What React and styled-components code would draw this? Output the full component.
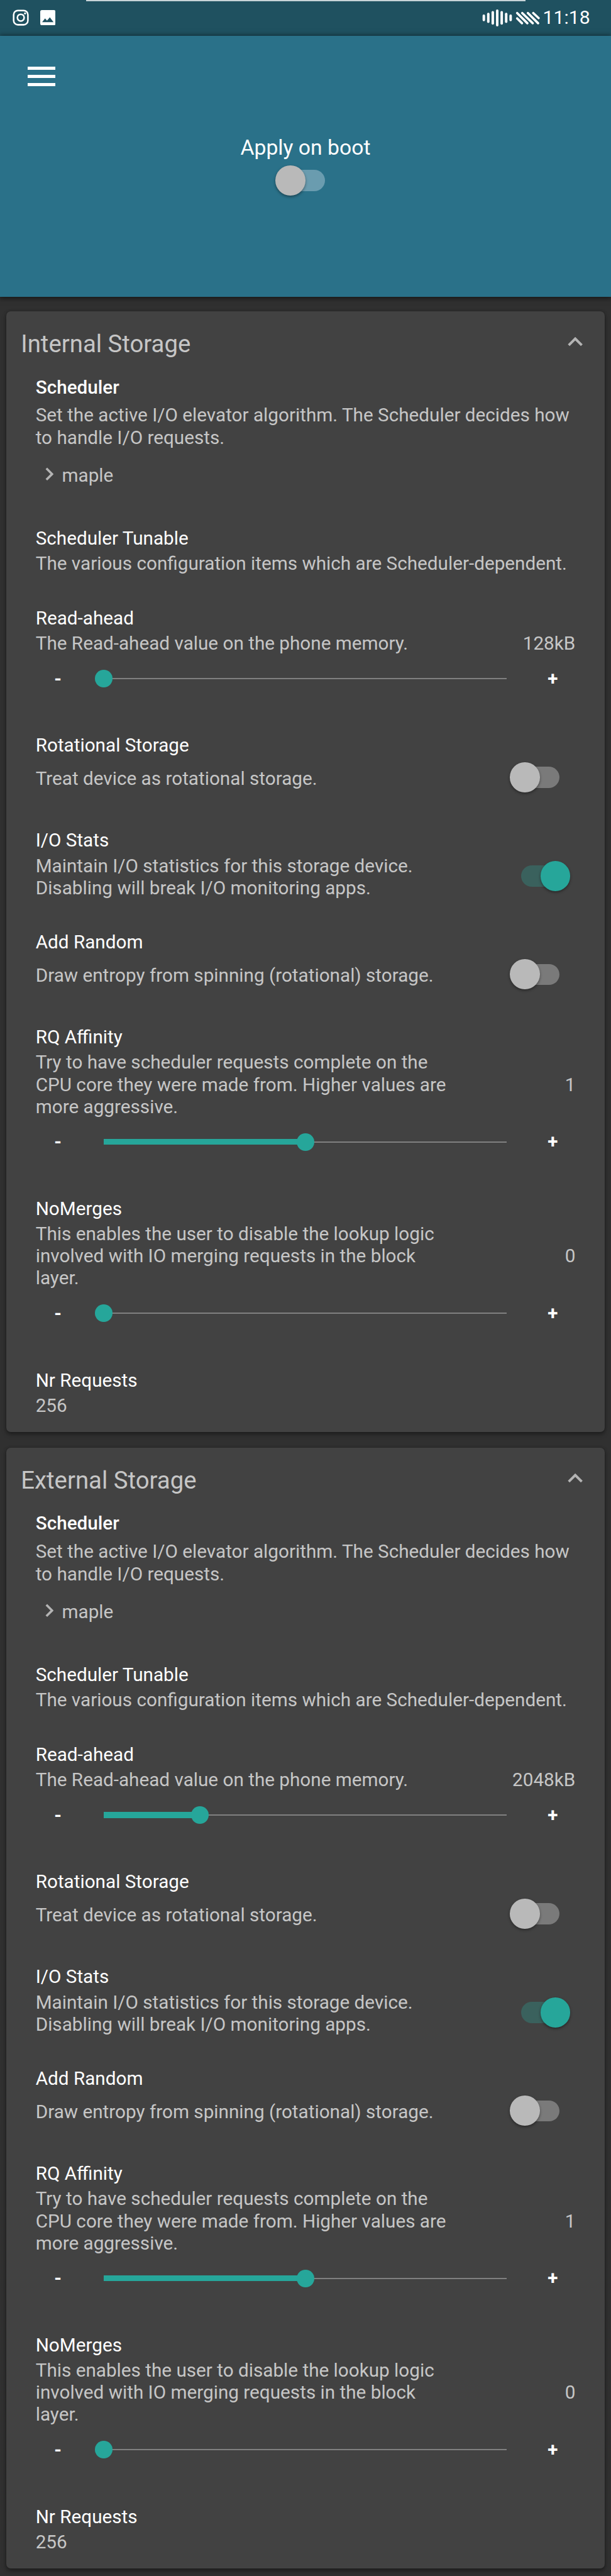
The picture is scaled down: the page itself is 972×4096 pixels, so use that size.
import React from 'react';
import styled, { createGlobalStyle } from 'styled-components';

const u = (n) => `${(n * 0.8999).toFixed(3)}px`;

const GlobalStyle = createGlobalStyle`
  * { box-sizing: border-box; }
  body { margin: 0; background: #303030; font-family: Roboto, sans-serif; }
`;

const Page = styled.main`
  width: 972px;
  height: 4096px;
  overflow: hidden;
  display: flex;
  flex-direction: column;
  background: #303030;
`;

const StatusBar = styled.div`
  position: relative;
  flex: none;
  height: ${u(63)};
  background: #1f5160;
  display: flex;
  align-items: center;
  padding: 0 ${u(37)} 0 ${u(22)};
  color: #fff;
`;

const TopLine = styled.div`
  position: absolute;
  top: 0;
  left: ${u(152)};
  width: ${u(777)};
  height: 2px;
  background: #c7d4d8;
`;

const StatusGroup = styled.div`
  display: flex;
  align-items: center;
  gap: ${(p) => u(p.$gap)};
  margin-left: ${(p) => (p.$end ? 'auto' : '0')};
`;

const Icon = styled.svg`
  display: block;
  flex: none;
  width: ${(p) => u(p.$w)};
  height: ${(p) => u(p.$h)};
  margin-bottom: ${(p) => u(p.$lift || 0)};
`;

const Clock = styled.span`
  font-size: ${u(33.6)};
  line-height: ${u(40)};
`;

const Header = styled.header`
  position: relative;
  z-index: 1;
  flex: none;
  height: ${u(462)};
  background: #2a7189;
  box-shadow: 0 1px 8px 1px rgba(0, 0, 0, 0.6);
  display: flex;
  flex-direction: column;
  padding-top: ${u(55)};
`;

const MenuButton = styled.div`
  display: flex;
  flex-direction: column;
  gap: ${u(8.8)};
  width: ${u(49)};
  margin-left: ${u(49)};
`;

const MenuBar = styled.span`
  height: ${u(5.5)};
  background: #fff;
`;

const BootToggle = styled.div`
  display: flex;
  flex-direction: column;
  align-items: center;
  margin-top: ${u(86.4)};
`;

const BootLabel = styled.div`
  font-size: ${u(37.5)};
  line-height: ${u(44)};
  color: #fff;
  margin-bottom: ${u(10)};
`;

const SwitchTrack = styled.div`
  position: relative;
  flex: none;
  width: ${u(68)};
  height: ${u(37)};
  margin-bottom: ${(p) => u(p.$lift || 0)};
  border-radius: ${u(19)};
  background: ${(p) => (p.$on ? '#3a615d' : p.$light ? '#6a9caf' : '#7a7a7a')};

  &::after {
    content: '';
    position: absolute;
    top: ${u(-8)};
    left: ${(p) => u(p.$on ? 34.5 : -19)};
    width: ${u(53)};
    height: ${u(53)};
    border-radius: 50%;
    background: ${(p) => (p.$on ? '#26a69a' : '#b9b9b9')};
    box-shadow: 0 2px 4px rgba(0, 0, 0, 0.4);
  }
`;

const BootSwitch = styled.div`
  height: ${u(53)};
  display: flex;
  align-items: center;
`;

const Cards = styled.div`
  flex: none;
  display: flex;
  flex-direction: column;
  gap: ${u(28)};
  padding: ${u(25)} ${u(11)} 0;
`;

const Card = styled.section`
  height: ${u(1980)};
  background: #424242;
  border-radius: ${u(8)};
  box-shadow: 0 4px 7px rgba(0, 0, 0, 0.35), 0 0 4px rgba(0, 0, 0, 0.25);
  padding: 0 ${u(52)};
`;

const CardHeader = styled.div`
  display: flex;
  align-items: center;
  justify-content: space-between;
  height: ${u(114)};
  margin: 0 ${u(-13)} 0 ${u(-26)};
  color: #c6c6c6;
`;

const CardTitle = styled.h2`
  margin: 0;
  font-size: ${u(42.6)};
  font-weight: 400;
  line-height: ${u(50)};
`;

const Item = styled.div`
  height: ${(p) => u(p.$h)};
`;

const ItemTitle = styled.div`
  font-size: ${u(33)};
  line-height: ${u(40)};
  height: ${(p) => u(p.$h || 44.4)};
  font-weight: ${(p) => (p.$strong ? 500 : 400)};
  color: #fff;
`;

const Line = styled.div`
  font-size: ${u(33)};
  line-height: ${u(39.2)};
  color: #c6c6c6;
  white-space: nowrap;
`;

const Row = styled.div`
  display: flex;
  align-items: center;
  justify-content: space-between;
`;

const SwitchRow = styled(Row)`
  height: ${(p) => u(p.$h)};
  padding-right: ${u(28.5)};
`;

const Choice = styled.div`
  display: flex;
  align-items: center;
  gap: ${u(14.5)};
  padding-left: ${u(17)};
  margin-top: ${u(27.7)};
`;

const Slider = styled.div`
  display: flex;
  align-items: center;
  height: ${u(32)};
  margin-top: ${u(27)};
`;

const Step = styled.span`
  width: ${(p) => u(p.$w)};
  padding-left: ${(p) => u(p.$pad)};
  font-size: ${u(33)};
  line-height: ${u(32)};
  font-weight: 700;
  color: #fff;
`;

const Rail = styled.div`
  position: relative;
  width: ${u(712.5)};
  height: 2px;
  background: #808080;
`;

const Fill = styled.div`
  position: absolute;
  left: 0;
  top: calc(1px - ${u(5.2)});
  height: ${u(10.4)};
  background: #26a69a;
`;

const Thumb = styled.div`
  position: absolute;
  top: calc(1px - ${u(15.5)});
  width: ${u(31)};
  height: ${u(31)};
  margin-left: ${u(-15.5)};
  border-radius: 50%;
  background: #26a69a;
`;

function Chevron({ up }) {
  return up ? (
    <Icon $w={27} $h={16} $lift={6} viewBox="0 0 27 16">
      <path d="M2 14.3 13.5 2.8 25 14.3" fill="none" stroke="#b4b4b4" strokeWidth="4.4" />
    </Icon>
  ) : (
    <Icon $w={15} $h={24} $lift={4} viewBox="0 0 15 24">
      <path d="M2 2 12 12 2 22" fill="none" stroke="#b4b4b4" strokeWidth="4" />
    </Icon>
  );
}

function SliderControl({ value }) {
  return (
    <Slider>
      <Step $w={120.6} $pad={33}>-</Step>
      <Rail>
        <Fill style={{ width: `${value}%` }} />
        <Thumb style={{ left: `${value}%` }} />
      </Rail>
      <Step $w={100} $pad={72}>+</Step>
    </Slider>
  );
}

function Lines({ items }) {
  return <div>{items.map((t) => <Line key={t}>{t}</Line>)}</div>;
}

function SliderItem({ title, lines, value, percent, height }) {
  return (
    <Item $h={height}>
      <ItemTitle>{title}</ItemTitle>
      <Row>
        <Lines items={lines} />
        <Line>{value}</Line>
      </Row>
      <SliderControl value={percent} />
    </Item>
  );
}

function SwitchItem({ title, lines, on, height, rowHeight }) {
  return (
    <Item $h={height}>
      <ItemTitle>{title}</ItemTitle>
      <SwitchRow $h={rowHeight}>
        <Lines items={lines} />
        <SwitchTrack $on={on} $lift={3} />
      </SwitchRow>
    </Item>
  );
}

function StorageCard({ title, readAhead, readAheadPercent }) {
  return (
    <Card>
      <CardHeader>
        <CardTitle>{title}</CardTitle>
        <Chevron up />
      </CardHeader>
      <Item $h={267.3}>
        <ItemTitle $strong $h={50}>Scheduler</ItemTitle>
        <Lines items={['Set the active I/O elevator algorithm. The Scheduler decides how', 'to handle I/O requests.']} />
        <Choice>
          <Chevron />
          <Line>maple</Line>
        </Choice>
      </Item>
      <Item $h={141.3}>
        <ItemTitle>Scheduler Tunable</ItemTitle>
        <Line>The various configuration items which are Scheduler-dependent.</Line>
      </Item>
      <SliderItem title="Read-ahead" lines={['The Read-ahead value on the phone memory.']} value={readAhead} percent={readAheadPercent} height={224.3} />
      <SwitchItem title="Rotational Storage" lines={['Treat device as rotational storage.']} height={168.1} rowHeight={67.6} />
      <SwitchItem title="I/O Stats" lines={['Maintain I/O statistics for this storage device.', 'Disabling will break I/O monitoring apps.']} on height={180} rowHeight={80.4} />
      <SwitchItem title="Add Random" lines={['Draw entropy from spinning (rotational) storage.']} height={167.9} rowHeight={67.6} />
      <SliderItem title="RQ Affinity" lines={['Try to have scheduler requests complete on the', 'CPU core they were made from. Higher values are', 'more aggressive.']} value="1" percent={50} height={302.9} />
      <SliderItem title="NoMerges" lines={['This enables the user to disable the lookup logic', 'involved with IO merging requests in the block', 'layer.']} value="0" percent={0} height={303.6} />
      <Item $h={90}>
        <ItemTitle>Nr Requests</ItemTitle>
        <Line>256</Line>
      </Item>
    </Card>
  );
}

const WAVE = [12, 18, 24, 30, 24, 18, 12];

export default function App() {
  return (
    <Page>
      <GlobalStyle />
      <StatusBar>
        <TopLine />
        <StatusGroup $gap={20}>
          <Icon $w={29} $h={29} viewBox="0 0 29 29" fill="none" stroke="#fff" strokeWidth="2.8">
            <rect x="1.9" y="1.9" width="25.2" height="25.2" rx="7.5" />
            <circle cx="14.5" cy="14.5" r="6" />
            <circle cx="22" cy="7" r="1.8" fill="#fff" stroke="none" />
          </Icon>
          <Icon $w={27} $h={27} viewBox="0 0 27 27">
            <path fillRule="evenodd" fill="#fff" d="M3 0H24A3 3 0 0 1 27 3V24A3 3 0 0 1 24 27H3A3 3 0 0 1 0 24V3A3 3 0 0 1 3 0ZM3.3 21.3H23.5L17 12.7 12 18.5 8.5 14.7Z" />
          </Icon>
        </StatusGroup>
        <StatusGroup $gap={4.4} $end>
          <Icon $w={54} $h={32} viewBox="0 0 54 32" stroke="#fff" strokeWidth="4.4" strokeLinecap="round">
            {WAVE.map((h, i) => (
              <line key={i} x1={3 + i * 7.9} x2={3 + i * 7.9} y1={16 - h / 2 + 2.2} y2={16 + h / 2 - 2.2} />
            ))}
          </Icon>
          <Icon $w={44} $h={24} viewBox="0 0 44 24" stroke="#fff" strokeWidth="4" strokeLinecap="round">
            <path d="M3 12.5 11.5 21M3 3 21 21M12 3 30.5 21M22 3 40 21M31.5 3 41 12" fill="none" />
          </Icon>
          <Clock>11:18</Clock>
        </StatusGroup>
      </StatusBar>
      <Header>
        <MenuButton>
          <MenuBar />
          <MenuBar />
          <MenuBar />
        </MenuButton>
        <BootToggle>
          <BootLabel>Apply on boot</BootLabel>
          <BootSwitch>
            <SwitchTrack $light />
          </BootSwitch>
        </BootToggle>
      </Header>
      <Cards>
        <StorageCard title="Internal Storage" readAhead="128kB" readAheadPercent={0} />
        <StorageCard title="External Storage" readAhead="2048kB" readAheadPercent={23.8} />
      </Cards>
    </Page>
  );
}
